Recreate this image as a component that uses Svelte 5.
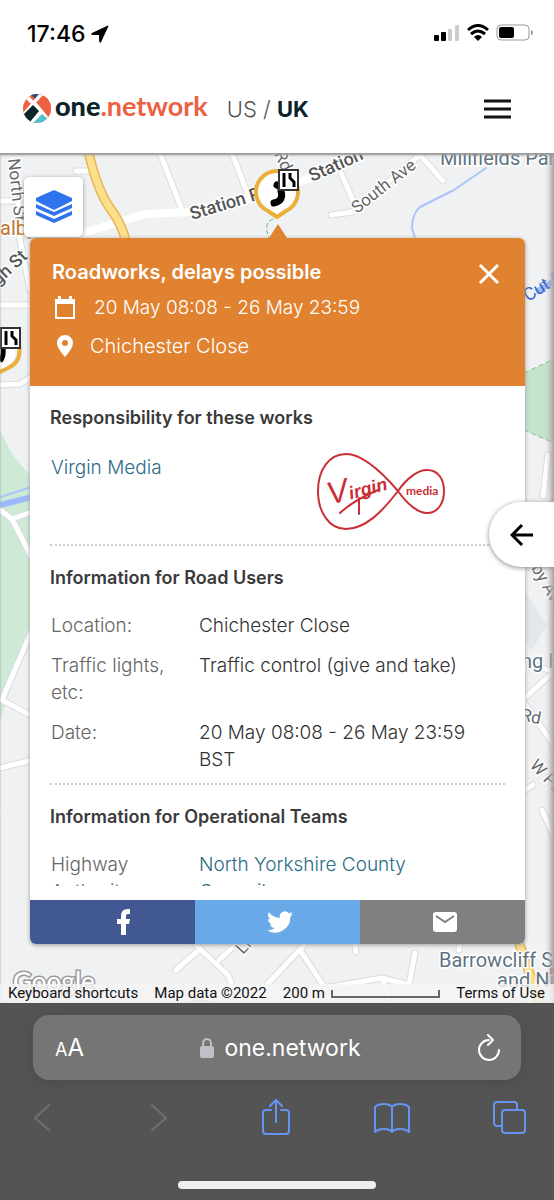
<script>
  const details = [
    { label: 'Location:', value: 'Chichester Close' },
    { label: 'Traffic lights, etc:', value: 'Traffic control (give and take)' },
    { label: 'Date:', value: '20 May 08:08 - 26 May 23:59 BST' }
  ];
  const minorRoads =
    'M0 201H18L20 240 30 290M0 305H31M0 385 20 384 31 377M76 171H92M160 153 182 210M232 153 248 195M331 215 352 212 420 155 443 181M341 173 355 205M0 510 12 519 32 558M12 519 32 512M32 630 2 700 28 714M0 768 32 760M548 455 543 496M554 672 522 700M522 700 554 745M554 672 530 664M525 790 533 785M542 810 560 850M176 970 200 949 228 975 234 990M200 949 190 938M219 960 246 935M262 990 305 944M300 950 325 988 382 978 409 985M300 950 310 938M409 985 415 953M354 938 356 952M460 938 459 950M383 980 388 998';
</script>

<div class="app">
  <div class="status">
    <span class="clock">17:46</span>
    <svg width="18" height="18" viewBox="0 0 18 18" aria-hidden="true"><path d="M17 1 1 8.500Q0 9 1 9.300L8.500 9.500 8.700 16.500Q9 18 9.600 17Z" stroke="#000" stroke-linejoin="round" /></svg>
    <svg class="signals" width="101" height="20" viewBox="0 0 101 20" aria-hidden="true">
      <rect x="1" y="11" width="5" height="6" rx="1" /><rect x="8" y="8" width="5" height="9" rx="1" />
      <rect x="15" y="5" width="4" height="12" rx="1" fill="#ccc" /><rect x="22" y="1" width="4" height="16" rx="1" fill="#ccc" />
      <g fill="none" stroke="#000" stroke-width="3"><path d="M35 6Q45-3 55 6M38 10Q45 4 52 10" /></g>
      <path d="M41 13Q45 9 49 13L45 17Z" />
      <rect x="64" y="1" width="32" height="15" rx="4" fill="#fff" stroke="#999" />
      <rect x="66" y="3" width="15" height="11" rx="2" /><path d="M98 6Q100 6 100 8.500T98 11Z" fill="#999" />
    </svg>
  </div>

  <header>
    <a class="brand" href="#home">
      <svg width="28" height="29" viewBox="0 0 28 29" aria-hidden="true">
        <defs><clipPath id="disc"><ellipse cx="14" cy="14.500" rx="14" ry="14.500" /></clipPath></defs>
        <g clip-path="url(#disc)">
          <path fill="#ec6142" d="M0 0H28V29H0Z" />
          <path fill="#2a4a6b" d="M6 0H19L13 5Z" />
          <path fill="#fff" d="M0 19 16 0H21L15 7 29 23V29H0Z" />
          <path fill="#fff" d="M4 0 16 13 12 14 3 5Z" />
          <path fill="#ec6142" d="M15 7 18 3 28 0V24H26L13 8Z" />
          <path fill="#0c2329" d="M10 11 16 17 7 28 0 21Z" />
          <path fill="#55bfcc" d="M19 20 26 26 18 30 10 29Z" />
        </g>
      </svg>
      <span><b>one</b><i>.network</i></span>
    </a>
    <nav><a href="#us">US</a> <span>/</span> <a class="on" href="#uk">UK</a></nav>
    <button class="menu" aria-label="Menu"><svg width="28" height="20" viewBox="0 0 28 20"><path d="M1 2H28M1 10H28M1 18H28" /></svg></button>
  </header>

  <main>
    <svg class="map" viewBox="0 153 554 850" preserveAspectRatio="xMidYMin slice">
      <rect y="153" width="554" height="850" fill="#eff1f3" />
      <path fill="#ceead6" d="M0 431Q12 458 31 476V628L0 720Z" />
      <path fill="#c4e4cb" d="M524 373 554 359V443L524 430Z" />
      <path d="M524 373 554 359M524 430 554 443" stroke="#8fb79a" stroke-dasharray="5 3" fill="none" />
      <path fill="#e3e7ea" d="M524 590 547 625 532 650 524 642Z" />
      <g fill="none" stroke-linecap="round" stroke-linejoin="round">
        <path stroke="#d9dce0" stroke-width="7" d={minorRoads} />
        <path stroke="#fff" stroke-width="5" d={minorRoads} />
        <path stroke="#fff" stroke-width="8" d="M80 234 145 214 190 212 265 195 310 178 360 150" />
        <path stroke="#e8b653" stroke-width="10" d="M88 150Q97 190 110 208T126 242M518 940 540 1003" />
        <path stroke="#fbdf8b" stroke-width="7" d="M88 150Q97 190 110 208T126 242M518 940 540 1003" />
        <path stroke="#a9c5fb" stroke-width="2" d="M486 168 454 190 420 207Q412 214 412 228L416 242M0 497 32 487" />
        <path stroke="#9db9fa" stroke-width="6" stroke-linecap="butt" d="M0 505 32 497M536 292 556 280" />
        <path stroke="#6cbd86" stroke-dasharray="4 3" d="M273 219Q262 223 270 240" />
      </g>
      <path fill="#c5c9cf" d="M186 1003Q200 995 213 1003Z" />
      <path fill="#bb5e6c" d="M550 963 554 960V982H550Z" />
      <g class="labels">
        <text transform="translate(8 159) rotate(84)">North St</text>
        <text x="0" y="235" class="place">alby</text>
        <text transform="translate(-2 286) rotate(-43)" class="big">gh St</text>
        <text transform="translate(192 220) rotate(-17)" class="big">Station Rd</text>
        <text transform="translate(312 182) rotate(-24)" class="big">Station</text>
        <text transform="translate(274 154) rotate(65)">Rd</text>
        <text transform="translate(357 214) rotate(-38)">South Ave</text>
        <text x="440" y="165" class="area">Millfields Park</text>
        <text transform="translate(528 302) rotate(-32)" class="water">Cut C</text>
        <text transform="translate(531 568) rotate(60)">by Ave</text>
        <text x="521" y="668" class="area">ng H</text>
        <text transform="translate(520 720) rotate(12)">Rd</text>
        <text transform="translate(529 766) rotate(47)">W Park</text>
        <text transform="translate(-5 814) rotate(-70)">y</text>
        <text transform="translate(243 955) rotate(-48)">Link</text>
        <text x="439" y="967" class="area">Barrowcliff School</text>
        <text x="497" y="987" class="area">and Nursery</text>
        <text x="13" y="991" class="google">Google</text>
      </g>
      <path d="M277 217 268 211A21 21 0 1 1 286 211Z" fill="#fff" stroke="#ebb03c" stroke-width="4" stroke-linejoin="round" />
      <path d="M277 185 279 186M281 191Q284 201 274 203" fill="none" stroke="#000" stroke-width="7" stroke-linecap="round" />
      <rect x="279" y="170" width="19" height="20" fill="#fff" stroke="#333" stroke-width="2" />
      <path d="M284 173V187M290 173V178L294 182V187" fill="none" stroke="#000" stroke-width="3" />
      <path d="M-2 373 3 370A21 21 0 0 0 -2 330Z" fill="#fff" />
      <path d="M-2 373 8 368Q22 362 19 345" fill="none" stroke="#ebb03c" stroke-width="4" />
      <path d="M0 361Q4 357 3 348" fill="none" stroke="#000" stroke-width="5" />
      <rect x="1" y="328" width="19" height="20" fill="#fff" stroke="#333" stroke-width="2" />
      <path d="M6 331V345M12 331V336L16 340V345" fill="none" stroke="#000" stroke-width="3" />
    </svg>

    <button class="layers" aria-label="Map layers"><svg width="36" height="34" viewBox="0 0 36 34"><path d="M18 0 36 8V11L18 20 0 11V8ZM0 14 18 22 36 14V18L18 26 0 18ZM0 21 18 29 36 21V25L18 33 0 25Z" fill="#2f73ee" /></svg></button>

    <article>
      <div class="top">
        <button class="close" aria-label="Close"><svg width="22" height="22" viewBox="0 0 22 22"><path d="M2 2 20 20M20 2 2 20" /></svg></button>
        <h1>Roadworks, delays possible</h1>
        <p class="when"><svg width="22" height="24" viewBox="0 0 22 24"><path fill="#fff" fill-rule="evenodd" d="M4 0H7V3H15V0H18V3H21V22Q21 23 20 23H2Q1 23 1 22V3H4ZM3 8V21H19V8Z" /></svg>20 May 08:08 - 26 May 23:59</p>
        <p class="where"><svg width="22" height="24" viewBox="0 0 22 24"><path fill="#fff" fill-rule="evenodd" d="M11 1A8 8 0 0 1 19 9Q19 14 11 23 3 14 3 9A8 8 0 0 1 11 1ZM11 6A3 3 0 1 0 11 12 3 3 0 1 0 11 6Z" /></svg>Chichester Close</p>
      </div>
      <div class="scroll">
        <section>
          <h2>Responsibility for these works</h2>
          <div class="owner">
            <a href="#virgin">Virgin Media</a>
            <svg width="130" height="80" viewBox="0 0 130 80" role="img" aria-label="Virgin Media logo">
              <path d="M82 39C64 18 45 2 30 2 13 2 2 18 2 39S13 77 30 77C49 77 66 60 82 39 91 26 102 18 111 18 122 18 128 27 128 39S122 61 111 61C102 61 91 52 82 39Z" fill="none" stroke="#c92f35" stroke-width="2" />
              <text x="14" y="53" transform="rotate(-15 14 53)" class="script"><tspan class="initial">V</tspan>irgin</text>
              <path d="M24 61 Q38 48 62 38M43 46V62" fill="none" stroke="#c92f35" stroke-width="2" stroke-linecap="round" />
              <text x="90" y="43" class="media">media</text>
            </svg>
          </div>
        </section>
        <section>
          <h2>Information for Road Users</h2>
          <dl>{#each details as d}<dt>{d.label}</dt><dd>{d.value}</dd>{/each}</dl>
        </section>
        <section>
          <h2>Information for Operational Teams</h2>
          <dl><dt>Highway Authority</dt><dd><a href="#nycc">North Yorkshire County Council</a></dd></dl>
        </section>
      </div>
      <div class="share">
        <a class="fb" href="#facebook" aria-label="Share on Facebook"><svg width="26" height="26" viewBox="0 0 26 26"><path fill="#fff" d="M11 26V15H7V10H11V7Q11 0 18 0H20V5H18Q16 5 16 7V10H20L19 15H16V26Z" /></svg></a>
        <a class="tw" href="#twitter" aria-label="Share on Twitter"><svg width="26" height="26" viewBox="0 0 24 24"><path fill="#fff" d="M24 4.600a10 10 0 0 1-2.800.8 5 5 0 0 0 2.100-2.700 10 10 0 0 1-3.100 1.200 4.900 4.900 0 0 0-8.400 4.500A14 14 0 0 1 1.700 3.100a4.900 4.900 0 0 0 1.500 6.600 5 5 0 0 1-2.200-.6 4.900 4.900 0 0 0 3.900 4.900 5 5 0 0 1-2.200.1 4.900 4.900 0 0 0 4.600 3.400A9.900 9.900 0 0 1 0 19.500 14 14 0 0 0 21.500 7.100 10 10 0 0 0 24 4.600Z" /></svg></a>
        <a class="mail" href="#email" aria-label="Share by email"><svg width="26" height="22" viewBox="0 0 26 22"><rect x="1" y="1" width="24" height="20" rx="3" fill="#fff" /><path d="M4 5 13 11 22 5" fill="none" stroke="#808080" stroke-width="2" /></svg></a>
      </div>
    </article>

    <button class="drawer" aria-label="Open panel"><svg width="24" height="24" viewBox="0 0 24 24"><path d="M23 12H2M12 2 2 12 12 22" /></svg></button>

    <footer>
      <button>Keyboard shortcuts</button><span>Map data ©2022</span>
      <span class="scale">200 m <i></i></span><a href="#terms">Terms of Use</a>
    </footer>
  </main>

  <div class="browser">
    <div class="address">
      <button class="aa" aria-label="Page settings"><small>A</small>A</button>
      <span class="url"><svg width="14" height="20" viewBox="0 0 14 20"><rect y="8" width="14" height="12" rx="2" fill="#c0bfc6" /><path d="M3 9V6Q3 1 7 1T11 6V9" fill="none" stroke="#c0bfc6" stroke-width="2" /></svg>one.network</span>
      <button aria-label="Reload"><svg width="24" height="28" viewBox="0 0 24 28"><path d="M12 6A10 10 0 1 0 22 16M11 1 16 6 11 11" fill="none" stroke="#fff" stroke-width="2" stroke-linecap="round" stroke-linejoin="round" /></svg></button>
    </div>
    <div class="tools">
      <button aria-label="Back" disabled><svg width="18" height="38" viewBox="0 0 18 38"><path d="M16 7 2 20 16 32" /></svg></button>
      <button aria-label="Forward" disabled><svg width="18" height="38" viewBox="0 0 18 38"><path d="M2 7 16 20 2 32" /></svg></button>
      <button aria-label="Share"><svg width="30" height="38" viewBox="0 0 30 38"><path d="M10 12H5Q2 12 2 15V33Q2 36 5 36H25Q28 36 28 33V15Q28 12 25 12H20M15 24V2M9 8 15 2 21 8" /></svg></button>
      <button aria-label="Bookmarks"><svg width="36" height="38" viewBox="0 0 36 38"><path d="M18 9Q16 6 10 6 4 6 1 9V34Q4 31 10 31 16 31 18 34 20 31 26 31 32 31 35 34V9Q32 6 26 6 20 6 18 9V33" /></svg></button>
      <button aria-label="Tabs"><svg width="34" height="38" viewBox="0 0 34 38"><rect x="10" y="12" width="23" height="23" rx="3" /><path d="M9 28H5Q2 28 2 25V7Q2 4 5 4H22Q25 4 25 7V11" /></svg></button>
    </div>
    <div class="home"></div>
  </div>
</div>

<style>
  :global(body) { margin: 0; }
  * { box-sizing: border-box; }
  button { border: 0; padding: 0; background: none; font: inherit; color: inherit; }
  a { color: inherit; text-decoration: none; }
  svg { display: block; flex: none; }
  .app { position: relative; z-index: 0; display: flex; flex-direction: column; height: 100vh; min-height: 900px; font-family: Inter, sans-serif; background: #fff; overflow: hidden; }
  .status { display: flex; align-items: center; height: 68px; padding: 0 20px 0 27px; gap: 6px; }
  .clock { font-size: 23px; font-weight: 500; }
  .signals { margin-left: auto; }
  header { display: flex; align-items: center; height: 85px; padding: 0 43px 4px 23px; }
  .brand { display: flex; align-items: center; gap: 4px; padding-bottom: 1px; font: 700 27px/32px Lato, sans-serif; color: #0c2329; }
  .brand span { padding-bottom: 4px; }
  .brand i { font-style: normal; color: #ec6142; }
  nav { margin-left: 19px; font-size: 22px; font-weight: 300; color: #555; }
  nav .on { font-weight: 700; color: #0c2329; }
  .menu { margin-left: auto; }
  .menu path { stroke: #111; stroke-width: 3; }
  main { position: relative; flex: 1; min-height: 0; display: flex; flex-direction: column; padding: 85px 29px 59px 30px; overflow: hidden; box-shadow: inset 0 2px 2px #999, inset -4px 0 5px #aaa; }
  .map { position: absolute; inset: 0; width: 100%; height: 100%; z-index: -1; }
  .labels text { font-family: Roboto, sans-serif; font-size: 17px; fill: #666; stroke: #fff; stroke-width: 3px; paint-order: stroke; }
  .labels .big { font-size: 18px; font-weight: 500; fill: #555; }
  .labels .place { font-size: 20px; fill: #c27432; }
  .labels .area { font-size: 20px; fill: #607382; }
  .labels .water { font-size: 18px; fill: #3a65c4; stroke: none; }
  .labels .google { font: 500 26px Lato, sans-serif; fill: #fff; stroke: #999; }
  .layers { position: absolute; left: 24px; top: 24px; width: 59px; height: 60px; display: grid; place-items: center; border-radius: 5px; background: #fff; box-shadow: 0 1px 4px #999; }
  article { position: relative; flex: 1; min-height: 0; display: flex; flex-direction: column; border-radius: 6px; background: #fff; box-shadow: 0 1px 4px #999; }
  article::before { content: ''; position: absolute; left: 50%; top: -14px; margin-left: -9px; border: 9px solid transparent; border-top: 0; border-bottom: 14px solid #e08230; }
  .top { position: relative; height: 148px; padding: 20px 22px; border-radius: 6px 6px 0 0; background: #e08230; color: #fff; }
  h1 { margin: 0 0 8px; font-size: 20px; line-height: 28px; font-weight: 600; }
  .top p { display: flex; align-items: center; margin: 0 0 10px; padding-left: 2px; font-size: 20px; line-height: 28px; font-weight: 300; }
  .top .when { gap: 18px; font-size: 19px; }
  .where { gap: 14px; }
  .close { position: absolute; right: 25px; top: 25px; }
  .close path { stroke: #fff; stroke-width: 3; }
  .scroll { flex: 1; min-height: 0; margin-bottom: 14px; padding: 0 20px; overflow: hidden; color: #333; }
  section { padding: 18px 0 10px; border-bottom: 2px dotted #ccc; }
  h2 { margin: 0 0 20px; font-size: 18px; line-height: 28px; font-weight: 600; color: #3a3a3a; }
  .owner { display: flex; justify-content: space-between; padding: 0 59px 2px 1px; font-size: 19px; line-height: 32px; font-weight: 300; }
  section a { color: #2b6c86; }
  .script { font: italic 700 18px "Liberation Sans", sans-serif; fill: #c92f35; }
  .initial { font-size: 32px; font-weight: 400; }
  .media { font: 700 12px Lato, sans-serif; fill: #c92f35; }
  dl { display: grid; grid-template-columns: 118px 1fr; gap: 13px 30px; margin: 0; padding-left: 1px; font-size: 19px; line-height: 27px; font-weight: 300; }
  dt { color: #666; }
  dd { margin: 0; padding-right: 32px; }
  .share { display: grid; grid-template-columns: repeat(3, 1fr); height: 44px; border-radius: 0 0 6px 6px; overflow: hidden; }
  .share a { display: grid; place-items: center; padding-left: 5px; }
  .share .fb { padding-left: 20px; background: #415893; }
  .tw { background: #69a9e8; }
  .mail { background: #808080; }
  .drawer { position: absolute; right: 0; top: 349px; width: 65px; height: 65px; display: grid; place-items: center; border-radius: 33px 0 0 33px; background: #fff; box-shadow: 0 1px 5px #888; }
  .drawer path { fill: none; stroke: #000; stroke-width: 3; }
  footer { position: absolute; left: 0; right: 0; bottom: 0; display: flex; justify-content: space-between; height: 19px; padding: 0 9px 0 8px; background: #f5f5f5cc; font: 15px/19px Roboto, sans-serif; color: #111; }
  .scale { display: flex; align-items: center; gap: 6px; }
  .scale i { width: 109px; height: 8px; border: 2px solid #666; border-top: 0; }
  .browser { height: 197px; padding: 12px 33px; background: #545454; color: #fff; }
  .address { display: flex; justify-content: space-between; align-items: center; height: 65px; padding: 0 20px 0 22px; border-radius: 16px; background: #757575; box-shadow: 0 3px 14px #4448; }
  .aa { font-size: 24px; }
  .aa small { font-size: 18px; }
  .url { display: flex; align-items: center; gap: 10px; font-size: 23px; }
  .tools { display: flex; justify-content: space-between; margin: 18px -6px 0 -9px; }
  .tools button { display: grid; place-items: center; width: 36px; }
  .tools path, .tools rect { fill: none; stroke: #6595f0; stroke-width: 2; stroke-linejoin: round; stroke-linecap: round; }
  .tools button:disabled path { stroke: #707070; }
  .home { width: 198px; height: 8px; margin: 45px auto 0; border-radius: 4px; background: #eee; }
</style>
